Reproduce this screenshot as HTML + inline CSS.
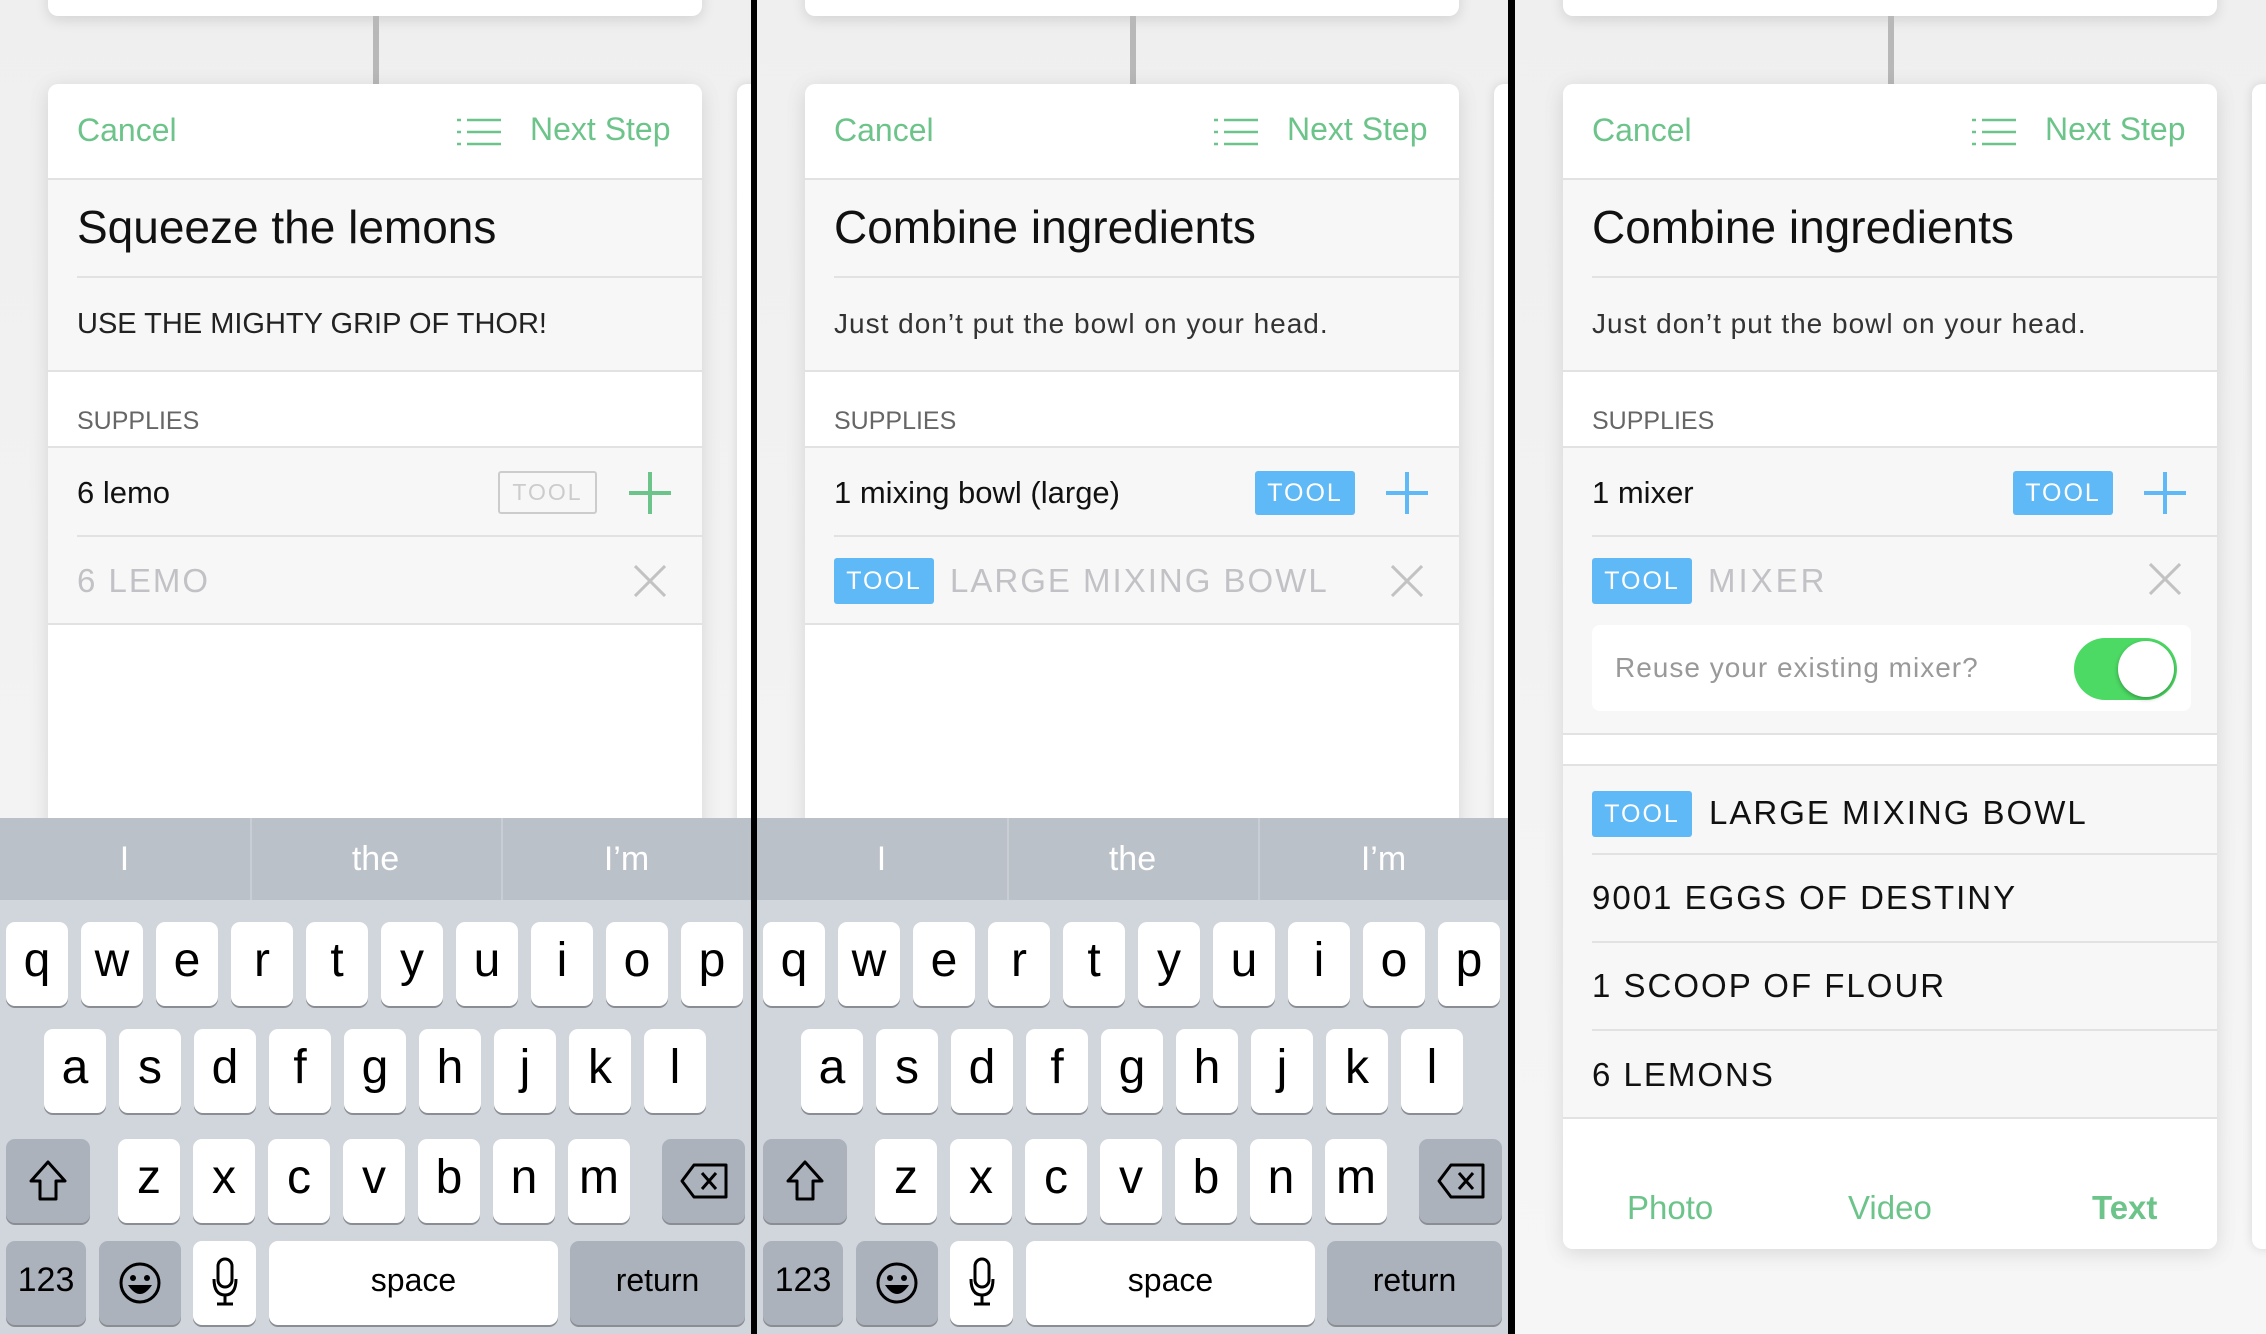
<!DOCTYPE html>
<html><head><meta charset="utf-8"><style>
*{box-sizing:border-box;margin:0;padding:0}
body{width:2266px;height:1334px;background:#000;position:relative;overflow:hidden;font-family:"Liberation Sans",sans-serif}
.p{position:absolute;top:0;width:751px;height:1334px;background:linear-gradient(#efefef,#f6f6f6);overflow:hidden}
.topc{position:absolute;left:48px;width:654px;top:-20px;height:36px;background:#fff;border-radius:10px;box-shadow:0 4px 14px rgba(0,0,0,.12)}
.con{position:absolute;left:373px;top:16px;width:6px;height:68px;background:#b8b8b8}
.side{position:absolute;left:737px;top:84px;width:30px;height:1250px;background:#fff;border-radius:10px;box-shadow:0 0 10px rgba(0,0,0,.12)}
.card{position:absolute;left:48px;width:654px;top:84px;height:1250px;background:#fff;border-radius:10px 10px 0 0;box-shadow:0 4px 20px rgba(0,0,0,.12);overflow:hidden}
.a{position:absolute}
.g{color:#6cc48a}
.hl{position:absolute;height:2px;background:#e2e2e2}
.tool{position:absolute;background:#5fb9f6;color:#fff;font-size:25px;letter-spacing:2px;text-align:center;border-radius:3px}
.kb{position:absolute;left:0;top:818px;width:751px;height:516px;background:#d1d5dc}
.sug{position:absolute;left:0;top:0;width:751px;height:82px;background:#bbc1c9}
.sug div{position:absolute;top:0;height:82px;line-height:82px;text-align:center;color:#fff;font-size:34px;width:249px}
.row{position:absolute;display:flex;gap:13px}
.k{width:62px;height:84px;background:#fff;border-radius:9px;box-shadow:0 2px 0 #8a8e94;text-align:center;font-size:48px;line-height:78px;color:#000}
.d{background:#abb2bc}
.ns{left:482px;top:27px;font-size:32px}
</style></head><body>

<div class="p" style="left:0">
<div class="topc"></div><div class="con"></div><div class="side"></div>
<div class="card">
 <div class="a g" style="left:29px;top:28px;font-size:32px">Cancel</div>
 <svg class="a" style="left:409px;top:34px" width="44" height="28"><g stroke="#6cc48a" stroke-width="2.5"><line x1="0" y1="2" x2="4" y2="2"/><line x1="10" y1="2" x2="44" y2="2"/><line x1="0" y1="14" x2="4" y2="14"/><line x1="10" y1="14" x2="44" y2="14"/><line x1="0" y1="26" x2="4" y2="26"/><line x1="10" y1="26" x2="44" y2="26"/></g></svg>
 <div class="a g ns">Next Step</div>
 <div class="a" style="left:0;top:95px;width:654px;height:1300px;background:#f7f7f7"></div>
 <div class="hl" style="left:0;top:94px;width:654px"></div>
 <div class="a" style="left:29px;top:116px;font-size:46px;color:#111">Squeeze the lemons</div>
 <div class="hl" style="left:29px;top:192px;width:625px"></div>
 <div class="a" style="left:29px;top:224px;font-size:29px;color:#222">USE THE MIGHTY GRIP OF THOR!</div>
 <div class="a" style="left:0;top:286px;width:654px;height:78px;background:#fff;border-top:2px solid #e2e2e2;border-bottom:2px solid #e2e2e2"></div>
 <div class="a" style="left:29px;top:323px;font-size:25px;color:#666">SUPPLIES</div>
 <div class="a" style="left:29px;top:391px;font-size:31px;color:#111">6 lemo</div>
 <div class="a" style="left:450px;top:387px;width:99px;height:43px;border:2px solid #ccc;border-radius:3px;color:#ccc;font-size:23px;letter-spacing:2px;text-align:center;line-height:39px">TOOL</div>
 <svg class="a" style="left:581px;top:388px" width="42" height="42"><g stroke="#6cc48a" stroke-width="4"><line x1="21" y1="0" x2="21" y2="42"/><line x1="0" y1="21" x2="42" y2="21"/></g></svg>
 <div class="hl" style="left:29px;top:451px;width:625px"></div>
 <div class="a" style="left:29px;top:478px;font-size:33px;color:#c2c2c6;letter-spacing:2px">6 LEMO</div>
 <svg class="a" style="left:586px;top:481px" width="32" height="32"><g stroke="#c2c2c2" stroke-width="3"><line x1="1" y1="1" x2="31" y2="31"/><line x1="31" y1="1" x2="1" y2="31"/></g></svg>
 <div class="a" style="left:0;top:539px;width:654px;height:720px;background:#fff;border-top:2px solid #e2e2e2"></div>
</div>
<div class="kb">
 <div class="sug"><div style="left:0">I</div><div style="left:250px;border-left:2px solid #c9ced4">the</div><div style="left:501px;border-left:2px solid #c9ced4">I’m</div></div>
 <div class="row" style="left:6px;top:104px"><div class="k">q</div><div class="k">w</div><div class="k">e</div><div class="k">r</div><div class="k">t</div><div class="k">y</div><div class="k">u</div><div class="k">i</div><div class="k">o</div><div class="k">p</div></div>
 <div class="row" style="left:44px;top:211px"><div class="k">a</div><div class="k">s</div><div class="k">d</div><div class="k">f</div><div class="k">g</div><div class="k">h</div><div class="k">j</div><div class="k">k</div><div class="k">l</div></div>
 <div class="k d a" style="left:6px;top:321px;width:84px"><svg width="40" height="44" style="margin-top:20px"><path d="M20 3 L37 22 H28 V40 H12 V22 H3 Z" fill="none" stroke="#000" stroke-width="3" stroke-linejoin="round"/></svg></div>
 <div class="row" style="left:118px;top:321px"><div class="k">z</div><div class="k">x</div><div class="k">c</div><div class="k">v</div><div class="k">b</div><div class="k">n</div><div class="k">m</div></div>
 <div class="k d a" style="left:662px;top:321px;width:83px"><svg width="48" height="36" style="margin-top:24px"><path d="M14 2 H46 V34 H14 L2 18 Z" fill="none" stroke="#000" stroke-width="3" stroke-linejoin="round"/><path d="M22 10 L36 26 M36 10 L22 26" stroke="#000" stroke-width="3"/></svg></div>
 <div class="k d a" style="left:6px;top:423px;width:80px;font-size:34px">123</div>
 <div class="k d a" style="left:99px;top:423px;width:82px"><svg width="44" height="44" style="margin-top:20px"><circle cx="22" cy="22" r="19" fill="none" stroke="#000" stroke-width="3"/><circle cx="15" cy="17" r="3"/><circle cx="29" cy="17" r="3"/><path d="M10 24 Q22 42 34 24 Z" fill="#000"/></svg></div>
 <div class="k a" style="left:193px;top:423px;width:63px"><svg width="26" height="50" style="margin-top:16px"><rect x="6" y="2" width="14" height="28" rx="7" fill="none" stroke="#000" stroke-width="3"/><path d="M2 22 Q2 38 13 38 Q24 38 24 22 M13 38 V47 M5 47 H21" fill="none" stroke="#000" stroke-width="3"/></svg></div>
 <div class="k a" style="left:269px;top:423px;width:289px;font-size:32px">space</div>
 <div class="k d a" style="left:570px;top:423px;width:175px;font-size:32px">return</div>
</div>
</div>

<div class="p" style="left:757px">
<div class="topc"></div><div class="con"></div><div class="side"></div>
<div class="card">
 <div class="a g" style="left:29px;top:28px;font-size:32px">Cancel</div>
 <svg class="a" style="left:409px;top:34px" width="44" height="28"><g stroke="#6cc48a" stroke-width="2.5"><line x1="0" y1="2" x2="4" y2="2"/><line x1="10" y1="2" x2="44" y2="2"/><line x1="0" y1="14" x2="4" y2="14"/><line x1="10" y1="14" x2="44" y2="14"/><line x1="0" y1="26" x2="4" y2="26"/><line x1="10" y1="26" x2="44" y2="26"/></g></svg>
 <div class="a g ns">Next Step</div>
 <div class="a" style="left:0;top:95px;width:654px;height:1300px;background:#f7f7f7"></div>
 <div class="hl" style="left:0;top:94px;width:654px"></div>
 <div class="a" style="left:29px;top:116px;font-size:46px;color:#111">Combine ingredients</div>
 <div class="hl" style="left:29px;top:192px;width:625px"></div>
 <div class="a" style="left:29px;top:224px;font-size:28px;color:#333;letter-spacing:1px">Just don’t put the bowl on your head.</div>
 <div class="a" style="left:0;top:286px;width:654px;height:78px;background:#fff;border-top:2px solid #e2e2e2;border-bottom:2px solid #e2e2e2"></div>
 <div class="a" style="left:29px;top:323px;font-size:25px;color:#666">SUPPLIES</div>
 <div class="a" style="left:29px;top:391px;font-size:31px;color:#111">1 mixing bowl (large)</div>
 <div class="tool" style="left:450px;top:387px;width:100px;height:44px;line-height:44px">TOOL</div>
 <svg class="a" style="left:581px;top:388px" width="42" height="42"><g stroke="#5fb9f6" stroke-width="4"><line x1="21" y1="0" x2="21" y2="42"/><line x1="0" y1="21" x2="42" y2="21"/></g></svg>
 <div class="hl" style="left:29px;top:451px;width:625px"></div>
 <div class="tool" style="left:29px;top:474px;width:100px;height:46px;line-height:46px">TOOL</div>
 <div class="a" style="left:145px;top:478px;font-size:33px;color:#c2c2c6;letter-spacing:2px">LARGE MIXING BOWL</div>
 <svg class="a" style="left:586px;top:481px" width="32" height="32"><g stroke="#c2c2c2" stroke-width="3"><line x1="1" y1="1" x2="31" y2="31"/><line x1="31" y1="1" x2="1" y2="31"/></g></svg>
 <div class="a" style="left:0;top:539px;width:654px;height:720px;background:#fff;border-top:2px solid #e2e2e2"></div>
</div>
<div class="kb">
 <div class="sug"><div style="left:0">I</div><div style="left:250px;border-left:2px solid #c9ced4">the</div><div style="left:501px;border-left:2px solid #c9ced4">I’m</div></div>
 <div class="row" style="left:6px;top:104px"><div class="k">q</div><div class="k">w</div><div class="k">e</div><div class="k">r</div><div class="k">t</div><div class="k">y</div><div class="k">u</div><div class="k">i</div><div class="k">o</div><div class="k">p</div></div>
 <div class="row" style="left:44px;top:211px"><div class="k">a</div><div class="k">s</div><div class="k">d</div><div class="k">f</div><div class="k">g</div><div class="k">h</div><div class="k">j</div><div class="k">k</div><div class="k">l</div></div>
 <div class="k d a" style="left:6px;top:321px;width:84px"><svg width="40" height="44" style="margin-top:20px"><path d="M20 3 L37 22 H28 V40 H12 V22 H3 Z" fill="none" stroke="#000" stroke-width="3" stroke-linejoin="round"/></svg></div>
 <div class="row" style="left:118px;top:321px"><div class="k">z</div><div class="k">x</div><div class="k">c</div><div class="k">v</div><div class="k">b</div><div class="k">n</div><div class="k">m</div></div>
 <div class="k d a" style="left:662px;top:321px;width:83px"><svg width="48" height="36" style="margin-top:24px"><path d="M14 2 H46 V34 H14 L2 18 Z" fill="none" stroke="#000" stroke-width="3" stroke-linejoin="round"/><path d="M22 10 L36 26 M36 10 L22 26" stroke="#000" stroke-width="3"/></svg></div>
 <div class="k d a" style="left:6px;top:423px;width:80px;font-size:34px">123</div>
 <div class="k d a" style="left:99px;top:423px;width:82px"><svg width="44" height="44" style="margin-top:20px"><circle cx="22" cy="22" r="19" fill="none" stroke="#000" stroke-width="3"/><circle cx="15" cy="17" r="3"/><circle cx="29" cy="17" r="3"/><path d="M10 24 Q22 42 34 24 Z" fill="#000"/></svg></div>
 <div class="k a" style="left:193px;top:423px;width:63px"><svg width="26" height="50" style="margin-top:16px"><rect x="6" y="2" width="14" height="28" rx="7" fill="none" stroke="#000" stroke-width="3"/><path d="M2 22 Q2 38 13 38 Q24 38 24 22 M13 38 V47 M5 47 H21" fill="none" stroke="#000" stroke-width="3"/></svg></div>
 <div class="k a" style="left:269px;top:423px;width:289px;font-size:32px">space</div>
 <div class="k d a" style="left:570px;top:423px;width:175px;font-size:32px">return</div>
</div>
</div>

<div class="p" style="left:1515px">
<div class="topc"></div><div class="con"></div><div class="side" style="height:1165px"></div>
<div class="card" style="height:1165px;border-radius:10px">
 <div class="a g" style="left:29px;top:28px;font-size:32px">Cancel</div>
 <svg class="a" style="left:409px;top:34px" width="44" height="28"><g stroke="#6cc48a" stroke-width="2.5"><line x1="0" y1="2" x2="4" y2="2"/><line x1="10" y1="2" x2="44" y2="2"/><line x1="0" y1="14" x2="4" y2="14"/><line x1="10" y1="14" x2="44" y2="14"/><line x1="0" y1="26" x2="4" y2="26"/><line x1="10" y1="26" x2="44" y2="26"/></g></svg>
 <div class="a g ns">Next Step</div>
 <div class="a" style="left:0;top:95px;width:654px;height:1300px;background:#f7f7f7"></div>
 <div class="hl" style="left:0;top:94px;width:654px"></div>
 <div class="a" style="left:29px;top:116px;font-size:46px;color:#111">Combine ingredients</div>
 <div class="hl" style="left:29px;top:192px;width:625px"></div>
 <div class="a" style="left:29px;top:224px;font-size:28px;color:#333;letter-spacing:1px">Just don’t put the bowl on your head.</div>
 <div class="a" style="left:0;top:286px;width:654px;height:78px;background:#fff;border-top:2px solid #e2e2e2;border-bottom:2px solid #e2e2e2"></div>
 <div class="a" style="left:29px;top:323px;font-size:25px;color:#666">SUPPLIES</div>
 <div class="a" style="left:29px;top:391px;font-size:31px;color:#111">1 mixer</div>
 <div class="tool" style="left:450px;top:387px;width:100px;height:44px;line-height:44px">TOOL</div>
 <svg class="a" style="left:581px;top:388px" width="42" height="42"><g stroke="#5fb9f6" stroke-width="4"><line x1="21" y1="0" x2="21" y2="42"/><line x1="0" y1="21" x2="42" y2="21"/></g></svg>
 <div class="hl" style="left:29px;top:451px;width:625px"></div>
 <div class="tool" style="left:29px;top:474px;width:100px;height:46px;line-height:46px">TOOL</div>
 <div class="a" style="left:145px;top:478px;font-size:33px;color:#c2c2c6;letter-spacing:3px">MIXER</div>
 <svg class="a" style="left:586px;top:479px" width="32" height="32"><g stroke="#c2c2c2" stroke-width="3"><line x1="1" y1="1" x2="31" y2="31"/><line x1="31" y1="1" x2="1" y2="31"/></g></svg>
 <div class="a" style="left:29px;top:541px;width:599px;height:86px;background:#fff;border-radius:8px"></div>
 <div class="a" style="left:52px;top:568px;font-size:28px;color:#999;letter-spacing:1px">Reuse your existing mixer?</div>
 <div class="a" style="left:511px;top:554px;width:103px;height:62px;border-radius:31px;background:#4cd964"></div>
 <div class="a" style="left:555px;top:557px;width:56px;height:56px;border-radius:50%;background:#fff;box-shadow:0 2px 4px rgba(0,0,0,.3)"></div>
 <div class="a" style="left:0;top:649px;width:654px;height:33px;background:#fff;border-top:2px solid #e2e2e2;border-bottom:2px solid #e2e2e2"></div>
 <div class="tool" style="left:29px;top:707px;width:100px;height:46px;line-height:46px">TOOL</div>
 <div class="a" style="left:146px;top:710px;font-size:33px;color:#111;letter-spacing:2px">LARGE MIXING BOWL</div>
 <div class="hl" style="left:29px;top:769px;width:625px"></div>
 <div class="a" style="left:29px;top:795px;font-size:33px;color:#111;letter-spacing:2px">9001 EGGS OF DESTINY</div>
 <div class="hl" style="left:29px;top:857px;width:625px"></div>
 <div class="a" style="left:29px;top:883px;font-size:33px;color:#111;letter-spacing:2px">1 SCOOP OF FLOUR</div>
 <div class="hl" style="left:29px;top:945px;width:625px"></div>
 <div class="a" style="left:29px;top:972px;font-size:33px;color:#111;letter-spacing:2px">6 LEMONS</div>
 <div class="a" style="left:0;top:1033px;width:654px;height:200px;background:#fff;border-top:2px solid #e2e2e2"></div>
 <div class="a g" style="left:64px;top:1105px;font-size:33px">Photo</div>
 <div class="a g" style="left:285px;top:1105px;font-size:33px">Video</div>
 <div class="a g" style="left:529px;top:1105px;font-size:33px;font-weight:bold">Text</div>
</div>
</div>

<div class="a" style="left:751px;top:0;width:6px;height:1334px;background:#000"></div>
<div class="a" style="left:1508px;top:0;width:7px;height:1334px;background:#000"></div>
</body></html>
